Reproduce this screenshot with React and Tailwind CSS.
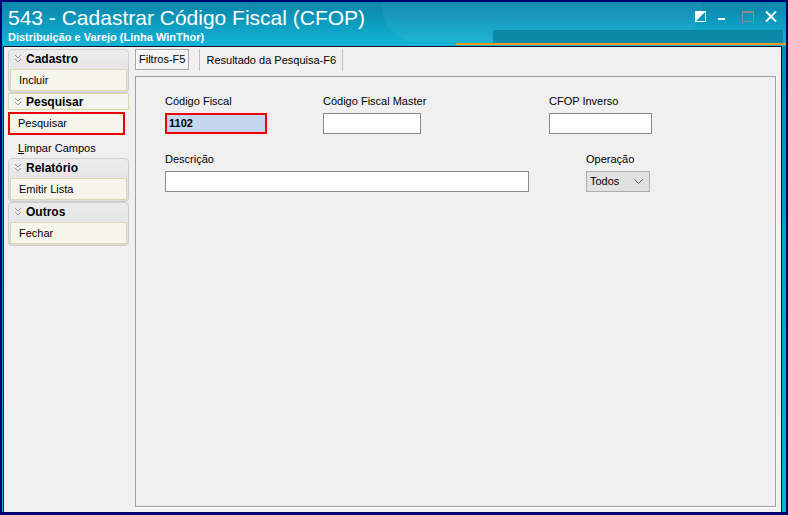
import React from 'react';

const font = { fontFamily: '"Liberation Sans", Arial, sans-serif' };

function Chevrons() {
  return (
    <svg width="8" height="9" viewBox="0 0 8 9" className="shrink-0">
      <polyline points="1,1 4,4 7,1" fill="none" stroke="#9a9a9a" strokeWidth="1" />
      <polyline points="1,5 4,8 7,5" fill="none" stroke="#9a9a9a" strokeWidth="1" />
    </svg>
  );
}

function GroupHeader({ label, h = 'h-[17px]' }) {
  return (
    <div className={`flex items-center gap-[4px] ${h} pl-[5px] text-[12px] font-bold text-black`}>
      <Chevrons />
      <span>{label}</span>
    </div>
  );
}

function Group({ label, item }) {
  return (
    <div className="rounded-[4px] border border-[#cdcdcd] bg-gradient-to-b from-[#ececec] to-[#dedede] pb-[1px]">
      <GroupHeader label={label} />
      <div className="mt-[2px] mx-[1px] h-[22px] flex items-center pl-[8px] text-[11px] text-black bg-[#f6f5ec] border border-[#dcd8b6]">
        {item}
      </div>
    </div>
  );
}

function Field({ label, width, children }) {
  return (
    <div className="flex flex-col">
      <span className="text-[11px] leading-[14px] text-black mb-[5px]">{label}</span>
      {children || <div className="h-[21px] bg-white border border-[#8a8a8a]" style={{ width }} />}
    </div>
  );
}

export default function App() {
  return (
    <div className="w-[788px] h-[515px] bg-[#00006e] pt-[2px] px-[2px] pb-[3px]" style={font}>
      <div className="h-full flex flex-col bg-gradient-to-b from-[#0088a8] via-[#00a4c4] to-[#00b4d4]">
        {/* title bar */}
        <div className="relative h-[44px] shrink-0 bg-gradient-to-b from-[#0a86aa] to-[#12b4d6] overflow-hidden">
          <div className="absolute left-[380px] top-[-30px] w-[320px] h-[70px] rounded-full bg-white/5" />
          <div className="absolute left-[491px] top-[28px] w-[290px] h-[14px] bg-[#0a88a6]" />
          <div className="absolute left-[454px] top-[41px] w-[330px] h-[2px] bg-[#f39a1d]" />
          <div className="relative flex justify-between pl-[6px] pr-[9px]">
            <div className="text-white pt-[4px]">
              <div className="text-[21px] leading-[24px]">543 - Cadastrar Código Fiscal (CFOP)</div>
              <div className="text-[11px] font-bold leading-[13px] mt-[1px]">Distribuição e Varejo (Linha WinThor)</div>
            </div>
            <div className="flex items-start pt-[9px]">
              <svg width="11" height="11" viewBox="0 0 11 11">
                <rect x="0.5" y="0.5" width="10" height="10" fill="none" stroke="#fff" />
                <polygon points="0,0 0,11 11,0" fill="#fff" />
              </svg>
              <svg width="11" height="11" viewBox="0 0 11 11" className="ml-[10px]">
                <rect x="2" y="7" width="7" height="2" fill="#fff" />
              </svg>
              <svg width="12" height="11" viewBox="0 0 12 11" className="ml-[15px]">
                <rect x="0.5" y="0.5" width="11" height="10" fill="none" stroke="#8c8c8c" />
                <rect x="0" y="0" width="12" height="2" fill="#8c8c8c" />
              </svg>
              <svg width="12" height="11" viewBox="0 0 12 11" className="ml-[11px]">
                <path d="M1 0.5 L11 10.5 M11 0.5 L1 10.5" stroke="#fff" strokeWidth="2" />
              </svg>
            </div>
          </div>
        </div>

        {/* content */}
        <div className="flex-1 ml-[1px] mr-[4px] border-t border-l border-r border-[#101030] bg-[#f0f0f0] flex pl-[4px] pt-[2px] pr-[4px] pb-[5px]">
          {/* sidebar */}
          <div className="w-[121px] shrink-0 flex flex-col">
            <Group label="Cadastro" item="Incluir" />
            <div className="border border-[#dcd8a8] bg-[#f4f4ee]">
              <GroupHeader label="Pesquisar" h="h-[15px]" />
            </div>
            <div className="mt-[2px] flex flex-col">
              <div className="h-[23px] w-[117px] flex items-center pl-[8px] text-[11px] text-black bg-[#f6f5ec] border-2 border-[#f00000]">Pesquisar</div>
              <div className="h-[21px] pt-[5px] flex items-center pl-[10px] text-[11px] text-black"><span><span className="underline">L</span>impar Campos</span></div>
            </div>
            <div className="mt-[2px]">
              <Group label="Relatório" item="Emitir Lista" />
            </div>
            <Group label="Outros" item="Fechar" />
          </div>

          {/* tabs */}
          <div className="flex-1 ml-[6px] flex flex-col">
            <div className="flex items-start h-[22px]">
              <div className="h-[21px] px-[3px] flex items-center text-[11px] text-black bg-[#f4f4f4] border border-[#a8a8a8] shadow-[inset_1px_1px_0_#ffffff]">Filtros-F5</div>
              <div className="ml-[10px] h-[22px] px-[6px] flex items-center text-[11px] text-black border-l border-r border-[#c0c0c0]">Resultado da Pesquisa-F6</div>
            </div>
            <div className="mt-[5px] flex-1 mr-[1px] border border-[#a0a0a0] shadow-[1px_1px_0_#ffffff] bg-[#f0f0f0] pl-[29px] pt-[17px] pr-[20px]">
              <div className="flex">
                <div className="w-[158px]">
                  <Field label="Código Fiscal">
                    <div className="h-[21px] w-[102px] bg-[#c6d6ee] border-2 border-[#ee0000] flex items-center pl-[2px] text-[11px] font-bold text-black">1102</div>
                  </Field>
                </div>
                <div className="w-[226px]">
                  <Field label="Código Fiscal Master" width={98} />
                </div>
                <Field label="CFOP Inverso" width={103} />
              </div>
              <div className="flex mt-[18px]">
                <div className="w-[421px]">
                  <Field label="Descrição" width={364} />
                </div>
                <Field label="Operação">
                  <div className="h-[21px] w-[64px] bg-[#e1e1e1] border border-[#adadad] flex items-center justify-between pl-[3px] pr-[6px] text-[11px] text-black">
                    <span>Todos</span>
                    <svg width="9" height="5" viewBox="0 0 9 5"><polyline points="0.5,0.5 4.5,4.5 8.5,0.5" fill="none" stroke="#555" /></svg>
                  </div>
                </Field>
              </div>
            </div>
          </div>
        </div>
      </div>
    </div>
  );
}
